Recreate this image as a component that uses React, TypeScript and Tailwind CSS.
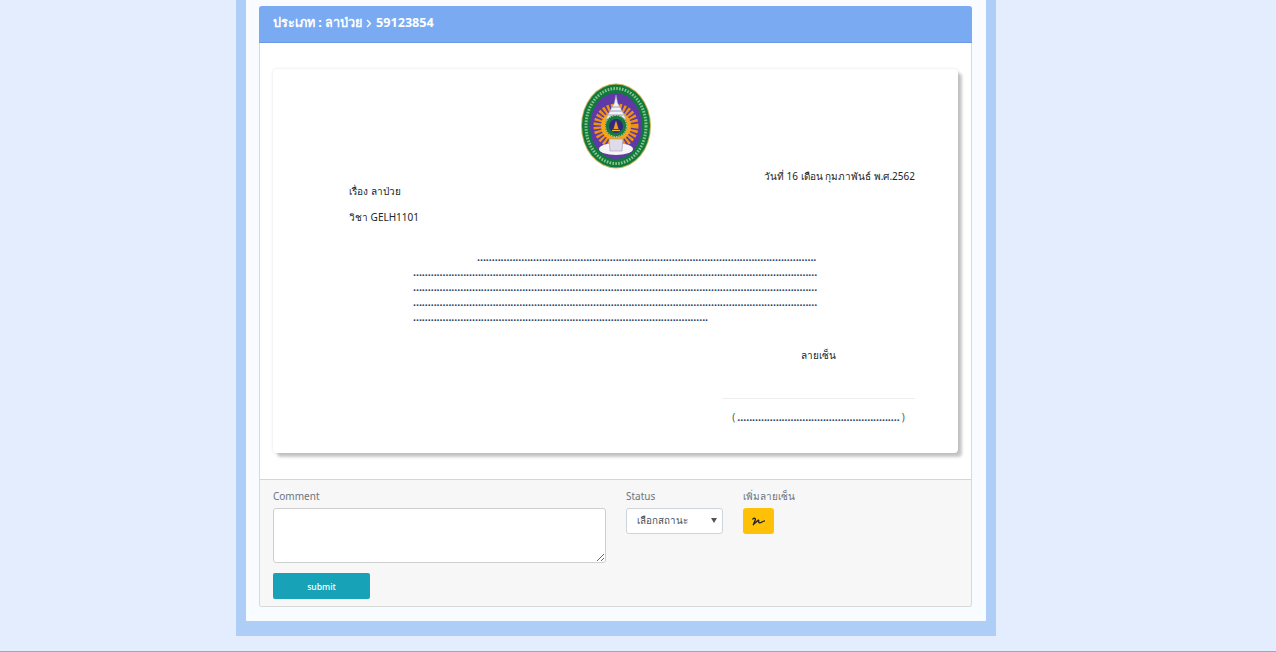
import React from 'react';
import { FaChevronRight, FaSignature } from 'react-icons/fa';

const Logo: React.FC = () => (
    <svg width="72" height="86" viewBox="0 0 72 86" className="block">
        <ellipse cx="36" cy="43" rx="35" ry="42.5" fill="#c9b458" />
        <ellipse cx="36" cy="43" rx="34" ry="41.5" fill="#0f7a3c" />
        <ellipse cx="36" cy="43" rx="30" ry="37.5" fill="none" stroke="#8cc48c" strokeWidth="3" strokeDasharray="1.6 1.3" />
        <ellipse cx="36" cy="43" rx="26" ry="33" fill="#5f3aa6" />
        <circle cx="36" cy="43" r="18" fill="none" stroke="#f2900f" strokeWidth="9" strokeDasharray="2.2 1.6" />
        <circle cx="36" cy="43" r="15" fill="#f4a51c" />
        <path d="M36 12 L37.6 20 L40 24 L43 30 L46 36 L26 36 L29 30 L32 24 L34.4 20 Z" fill="#f1f2f6" stroke="#a29bbd" strokeWidth="0.5" />
        <path d="M32 24 H40 M30 28 H42 M28.5 32 H43.5" stroke="#8d88a8" strokeWidth="0.8" />
        <circle cx="36" cy="43" r="11" fill="#157a3e" />
        <circle cx="36" cy="43" r="10.5" fill="none" stroke="#cfe6b5" strokeWidth="1" strokeDasharray="1.4 1.1" />
        <circle cx="36" cy="43" r="7" fill="#33287f" />
        <path d="M36 37.5 L38.5 46 L33.5 46 Z" fill="#f0a21f" />
        <path d="M32 47.5 H40" stroke="#e8b83a" strokeWidth="1.2" />
        <ellipse cx="36" cy="66" rx="17" ry="6" fill="#f7f4f6" />
        <path d="M29 56 H43 L42 68 H30 Z" fill="#e0dbe9" stroke="#8d88a8" strokeWidth="0.5" />
    </svg>
);

const DotLine: React.FC<{ count: number; className?: string }> = ({ count, className }) => (
    <div className={`h-[15px] whitespace-nowrap text-[10.5px] font-bold leading-[15px] text-[#1f3f66] ${className ?? ''}`}>{'.'.repeat(count)}</div>
);

const App: React.FC = () => {
    return (
        <div className="min-h-[652px] bg-[#e3edfd] border-b border-[#7dadf0] font-['Noto_Sans',sans-serif] text-[10px] text-[#212529]">
            <div className="ml-[236px] w-[760px] h-[636px] bg-[#f8fbff] border-x-10 border-b-[15px] border-[#aecdf7] px-[13px] pt-[6px]">
                <div className="w-[713px] rounded-[3px] border border-[#d9d9d9] border-t-0 bg-white">
                    <div className="h-[37px] flex items-center gap-[3px] rounded-t-[3px] -mx-px bg-[#7aabf2] border-b border-[#6a9ae0] px-[14px] pb-[2px] text-[12.6px] font-bold text-white">
                        <span>ประเภท : ลาป่วย</span>
                        <FaChevronRight className="w-[8px] h-[9px]" />
                        <span>59123854</span>
                    </div>

                    <div className="h-[436px] px-[13px] pt-[26px]">
                        <div className="h-[384px] w-[685px] rounded-[4px] bg-white pt-[14px] pr-[43px] shadow-[0_0_3px_rgba(0,0,0,0.12),4px_4px_3px_#c8c8c8]">
                            <div className="-mr-[43px] flex justify-center">
                                <Logo />
                            </div>
                            <div className="h-[15px] text-right leading-[15px]">วันที่ 16 เดือน กุมภาพันธ์ พ.ศ.2562</div>
                            <div className="ml-[76px] leading-[15px]">เรื่อง ลาป่วย</div>
                            <div className="ml-[76px] mt-[11px] leading-[15px]">วิชา GELH1101</div>

                            <div className="mt-[25px] ml-[140px]">
                                <DotLine count={115} className="ml-[64px]" />
                                <DotLine count={137} />
                                <DotLine count={137} />
                                <DotLine count={137} />
                                <DotLine count={100} />
                            </div>

                            <div className="ml-auto w-[193px]">
                                <div className="mt-[23px] text-center leading-[15px]">ลายเซ็น</div>
                                <div className="mt-[35px] border-t border-[#eeeeee]" />
                                <div className="mt-[11px] flex h-[15px] items-center justify-center gap-[2px] leading-[15px] text-[#555]">
                                    <span>(</span>
                                    <DotLine count={55} />
                                    <span>)</span>
                                </div>
                            </div>
                        </div>
                    </div>

                    <div className="h-[127px] rounded-b-[3px] border-t border-[#d5d5d5] bg-[#f7f7f7] px-[13px] pt-[8px]">
                        <div className="flex gap-[20px]">
                            <div className="w-[333px]">
                                <label className="block h-[20px] leading-[17px] text-[#6c757d]">Comment</label>
                                <textarea className="block h-[55px] w-full rounded-[3px] border border-[#cfcfcf] bg-white" />
                            </div>
                            <div className="w-[97px]">
                                <label className="block h-[20px] leading-[17px] text-[#6c757d]">Status</label>
                                <div className="relative">
                                    <select className="block h-[26px] w-full appearance-none rounded-[3px] border border-[#ced4da] bg-white pl-[10px] text-[9.8px] text-[#495057]">
                                        <option>เลือกสถานะ</option>
                                    </select>
                                    <span className="absolute right-[6px] top-[10px] h-0 w-0 border-x-[3px] border-t-[5px] border-x-transparent border-t-[#555]" />
                                </div>
                            </div>
                            <div>
                                <label className="block h-[20px] leading-[17px] text-[#6c757d]">เพิ่มลายเซ็น</label>
                                <button className="flex h-[26px] w-[31px] items-center justify-center rounded-[3px] bg-[#ffc107] text-[#212529]">
                                    <FaSignature className="h-[13px] w-[13px]" />
                                </button>
                            </div>
                        </div>
                        <button className="mt-[10px] block h-[26px] w-[97px] rounded-[2px] bg-[#17a2b8] pt-[2px] text-[8.6px] font-medium text-white">submit</button>
                    </div>
                </div>
            </div>
        </div>
    );
};

export default App;
